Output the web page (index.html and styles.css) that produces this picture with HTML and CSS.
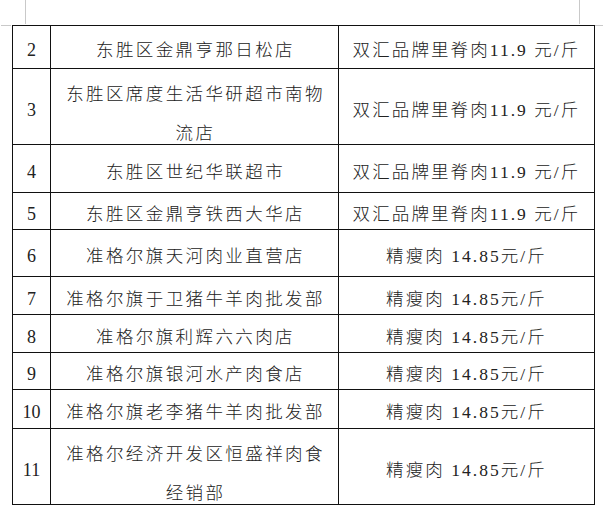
FILE: index.html
```html
<!DOCTYPE html>
<html lang="zh-CN">
<head>
<meta charset="utf-8">
<title>价格表</title>
<link rel="stylesheet" href="styles.css">
</head>
<body>
<div class="page">
  <span class="mark mark-tl-v"></span>
  <span class="mark mark-tl-h"></span>
  <span class="mark mark-tr-v"></span>
  <span class="mark mark-tr-h"></span>
  <table class="grid">
    <colgroup>
      <col class="c-no">
      <col class="c-name">
      <col class="c-price">
    </colgroup>
    <tbody>
      <tr class="r43"><td class="no">2</td><td class="name">东胜区金鼎亨那日松店</td><td class="price">双汇品牌里脊肉<span class="num">11.9</span> 元/斤</td></tr>
      <tr class="r75"><td class="no">3</td><td class="name"><div class="two">东胜区席度生活华研超市南物流店</div></td><td class="price">双汇品牌里脊肉<span class="num">11.9</span> 元/斤</td></tr>
      <tr class="r48"><td class="no">4</td><td class="name">东胜区世纪华联超市</td><td class="price">双汇品牌里脊肉<span class="num">11.9</span> 元/斤</td></tr>
      <tr class="r37"><td class="no">5</td><td class="name">东胜区金鼎亨铁西大华店</td><td class="price">双汇品牌里脊肉<span class="num">11.9</span> 元/斤</td></tr>
      <tr class="r47"><td class="no">6</td><td class="name">准格尔旗天河肉业直营店</td><td class="price">精瘦肉 <span class="num">14.85</span>元/斤</td></tr>
      <tr class="r38"><td class="no">7</td><td class="name">准格尔旗于卫猪牛羊肉批发部</td><td class="price">精瘦肉 <span class="num">14.85</span>元/斤</td></tr>
      <tr class="r38"><td class="no">8</td><td class="name">准格尔旗利辉六六肉店</td><td class="price">精瘦肉 <span class="num">14.85</span>元/斤</td></tr>
      <tr class="r37"><td class="no">9</td><td class="name">准格尔旗银河水产肉食店</td><td class="price">精瘦肉 <span class="num">14.85</span>元/斤</td></tr>
      <tr class="r39"><td class="no">10</td><td class="name">准格尔旗老李猪牛羊肉批发部</td><td class="price">精瘦肉 <span class="num">14.85</span>元/斤</td></tr>
      <tr class="r75"><td class="no">11</td><td class="name"><div class="two">准格尔经济开发区恒盛祥肉食经销部</div></td><td class="price">精瘦肉 <span class="num">14.85</span>元/斤</td></tr>
    </tbody>
  </table>
</div>
</body>
</html>
```
FILE: styles.css
```css
html, body {
  margin: 0;
  padding: 0;
  background: #ffffff;
}

.page {
  position: relative;
  width: 612px;
  height: 518px;
  padding: 25px 0 0 12px;
  box-sizing: border-box;
  font-family: "Liberation Serif", "Noto Sans CJK SC", serif;
  color: #222222;
}

.mark {
  position: absolute;
  background: #c9c9c9;
}
.mark-tl-v { left: 25px; top: 0; width: 1px; height: 24px; }
.mark-tl-h { left: 1px; top: 25px; width: 10px; height: 1px; }
.mark-tr-v { left: 579px; top: 0; width: 1px; height: 24px; }
.mark-tr-h { left: 595px; top: 25px; width: 8px; height: 1px; }

.grid {
  border-collapse: collapse;
  table-layout: fixed;
  width: 582px;
}

.c-no { width: 38px; }
.c-name { width: 288px; }
.c-price { width: 256px; }

.grid td {
  border: 1px solid #111111;
  text-align: center;
  vertical-align: middle;
  padding: 6px 0 0 0;
  font-size: 17.5px;
  line-height: 22px;
  font-weight: 300;
  letter-spacing: 2.4px;
  box-sizing: border-box;
}

.grid td.no {
  letter-spacing: 0;
  font-weight: 400;
  font-size: 18px;
}

.grid td.name {
  padding-left: 6px;
  padding-right: 4px;
}

.grid td.price {
  letter-spacing: 2.1px;
}

.num {
  font-family: "Liberation Serif", serif;
  font-weight: 400;
  letter-spacing: 2px;
}

.two {
  line-height: 39px;
  margin: 0 0 -9px 0;
}

.r43 td { height: 43px; }
.r75 td { height: 75px; }
.r48 td { height: 48px; }
.r37 td { height: 37px; }
.r47 td { height: 47px; }
.r38 td { height: 38px; }
.r39 td { height: 39px; }
```
